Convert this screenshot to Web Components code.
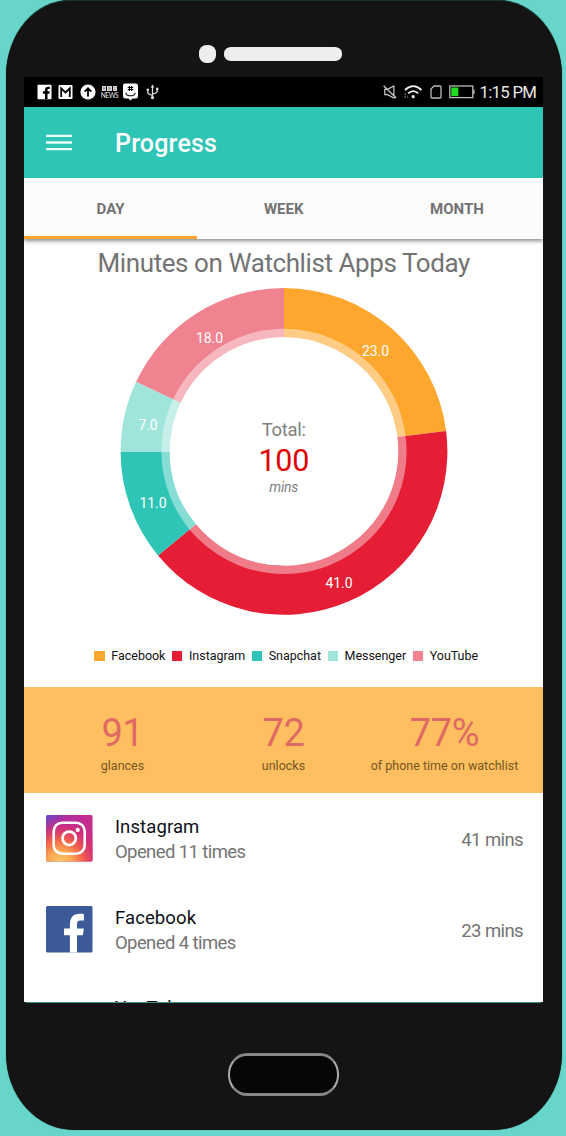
<!DOCTYPE html>
<html lang="en">
<head>
<meta charset="utf-8">
<title>Progress</title>
<style>
  html, body { margin: 0; padding: 0; }
  body { width: 566px; height: 1136px; overflow: hidden; background: #67d5c9; font-family: Roboto, "Liberation Sans", sans-serif; }
</style>
</head>
<body>
<phone-frame>
  <status-bar></status-bar>
  <app-bar>Progress</app-bar>
  <tab-strip>
    <tab-item active>DAY</tab-item>
    <tab-item>WEEK</tab-item>
    <tab-item>MONTH</tab-item>
  </tab-strip>
  <usage-chart heading="Minutes on Watchlist Apps Today"></usage-chart>
  <stat-band>
    <stat-item value="91" style="--w:197px">glances</stat-item>
    <stat-item value="72" style="--w:125px">unlocks</stat-item>
    <stat-item value="77%" style="--w:197px">of phone time on watchlist</stat-item>
  </stat-band>
  <app-row name="Instagram" opened="Opened 11 times" time="41 mins">
    <svg slot="icon" width="47" height="47" viewBox="0 0 47 47">
      <defs>
        <linearGradient id="ga" x1="0" y1="0" x2="1" y2="0"><stop offset="0" stop-color="#6a46c8"/><stop offset=".45" stop-color="#b02ea0"/><stop offset="1" stop-color="#c92d8c"/></linearGradient>
        <radialGradient id="gb" cx=".3" cy="1.02" r="1"><stop offset="0" stop-color="#fdc864"/><stop offset=".25" stop-color="#fba950"/><stop offset=".5" stop-color="#f2604c"/><stop offset=".75" stop-color="#da3070" stop-opacity=".8"/><stop offset="1" stop-color="#c92d8c" stop-opacity="0"/></radialGradient>
      </defs>
      <rect width="46.5" height="46.5" rx="1.5" fill="url(#ga)"/>
      <rect width="46.5" height="46.5" rx="1.5" fill="url(#gb)"/>
      <rect x="7.7" y="7.7" width="31" height="31" rx="8.5" fill="none" stroke="#fff" stroke-width="2.6"/>
      <circle cx="23.2" cy="23.3" r="6.7" fill="none" stroke="#fff" stroke-width="2.7"/>
      <circle cx="31.7" cy="14.9" r="2.1" fill="#fff"/>
    </svg>
  </app-row>
  <app-row name="Facebook" opened="Opened 4 times" time="23 mins">
    <svg slot="icon" width="47" height="47" viewBox="0 0 47 47">
      <rect width="46.5" height="46.5" rx="1.5" fill="#3c5a98"/>
      <path fill="#fff" d="M23.9 46.5V29.2H18v-6.8h5.9v-4.2c0-6.6 3.6-10.5 9.7-10.5 1.8 0 3.4.1 4.3.3v6.4h-3.4c-2.7 0-3.5 1.4-3.5 3.6v4.4h6.8l-.9 6.8H31v17.3z"/>
    </svg>
  </app-row>
  <app-row name="YouTube" opened="" time="" style="margin-top:-1.2px"></app-row>
</phone-frame>

<script>
function define(name, render) {
  customElements.define(name, class extends HTMLElement {
    constructor() { super(); this.attachShadow({ mode: 'open' }); }
    connectedCallback() { this.shadowRoot.innerHTML = render(this); }
  });
}

define('phone-frame', () => `
<style>
  :host { display: block; box-sizing: border-box; width: 556.5px; height: 1130px; margin-left: 5.8px; background: #141414;
    border-radius: 64px 64px 68px 68px / 76px; overflow: hidden; box-shadow: 0 0 1px #1d4b47; border-top: 1px solid #14302e; }
  .top { height: 76px; box-sizing: border-box; display: flex; align-items: center; gap: 7.5px; padding: 30px 0 0 193.6px; }
  .cam { width: 17px; height: 18.5px; border-radius: 7.5px; background: #eee; }
  .ear { width: 118.5px; height: 14.5px; border-radius: 7px / 6px; background: #eee; }
  .screen { width: 519.5px; height: 925px; margin-left: 18.2px; background: #fff; overflow: hidden; display: flex; flex-direction: column; }
  .edge { height: 1px; width: 515px; margin-left: 20px; background: #3f8f86; }
  .bottom { display: flex; justify-content: center; padding: 49.5px 2px 0 0; }
  .home { box-sizing: border-box; width: 111px; height: 43px; border: solid #aaa; border-width: 3.5px 2px; border-color: #868686 #aaa; border-radius: 19px / 21px; background: #040608; }
</style>
<div class="top"><div class="cam"></div><div class="ear"></div></div>
<div class="screen"><slot></slot></div>
<div class="edge"></div>
<div class="bottom"><div class="home"></div></div>`);

define('status-bar', () => `
<style>
  :host { display: flex; flex: none; height: 30px; background: #000; align-items: center; justify-content: space-between; box-sizing: border-box; padding: 0 7.5px 0 13px; }
  .g { display: flex; align-items: center; }
  svg { display: block; }
  .bbc { width: 17px; margin: 0 4.5px 0 5px; color: #ddd; }
  .b { display: flex; gap: 1px; justify-content: center; }
  .b span { background: #ddd; color: #888; width: 4.4px; height: 5px; font: 700 4px/5px Roboto, sans-serif; text-align: center; overflow: hidden; }
  .n { display: flex; justify-content: center; font: 500 6.6px/8px Lato, sans-serif; letter-spacing: -.4px; white-space: nowrap; }
  .t { font-size: 16.8px; letter-spacing: -.7px; word-spacing: 0; line-height: 30px; color: #e8e8e8; white-space: nowrap; margin: 0 -.3px 0 4px; }
</style>
<div class="g">
  <svg width="15" height="16" viewBox="0 0 15 16"><rect x=".5" y=".8" width="14" height="14.4" rx=".8" fill="#fff"/><path d="M8 15.2V9.7H6V7.3h2V6c0-2 1.2-3.2 3-3.2h1.8v2.3h-1.2c-.8 0-1.1.4-1.1 1.1v1.1h2.2l-.3 2.4h-1.9v5.5z" fill="#000"/></svg>
  <svg width="15" height="16" viewBox="0 0 15 16" style="margin-left:6.5px"><rect x=".5" y="1" width="14" height="14" rx="1" fill="#fff"/><path d="M3.2 13V4.4L7.5 8.4l4.3-4V13" fill="none" stroke="#000" stroke-width="1.8"/></svg>
  <svg width="16" height="16" viewBox="0 0 16 16" style="margin-left:6.5px"><circle cx="8" cy="8" r="7.6" fill="#fff"/><path d="M8 12.5V5M4.7 7.6L8 4.3l3.3 3.3" fill="none" stroke="#000" stroke-width="1.8"/></svg>
  <div class="bbc"><div class="b"><span>B</span><span>B</span><span>C</span></div><div class="n">NEWS</div></div>
  <svg width="17" height="18" viewBox="0 0 17 18"><path d="M3.3.5h10.4Q16 .5 16 2.8v10.4q0 2.3-2.3 2.3h-3.2L8.5 17.6 6.5 15.5H3.3Q1 15.5 1 13.2V2.8Q1 .5 3.3.5z" fill="#fff"/><path d="M7.4 3v5M9.6 3v5M5.7 4.5h5.6M5.7 6.5h5.6M3.7 9.8c1.2 4 8.4 4 9.6 0" fill="none" stroke="#000" stroke-width="1.1"/></svg>
  <svg width="13" height="16" viewBox="0 0 13 16" style="margin-left:7px"><path d="M6.5 2.5v10.5M1.8 6.2v2.3q0 1.5 4.7 3M11.2 5v2.2q0 1.6-4.7 3" fill="none" stroke="#ddd" stroke-width="1.3"/><path d="M6.5 .6l1.9 2.9H4.6z" fill="#ddd"/><circle cx="6.5" cy="13.6" r="1.7" fill="#ddd"/><circle cx="1.8" cy="5.8" r="1.3" fill="#ddd"/><rect x="10" y="3.7" width="2.4" height="2.4" fill="#ddd"/></svg>
</div>
<div class="g">
  <svg width="14" height="16" viewBox="0 0 14 16"><path d="M1.8 5.3h2.8L10.9 2v12L4.6 10.7H1.8zM.6 1.8l12.6 12.2" fill="none" stroke="#ccc" stroke-width="1.2"/></svg>
  <svg width="18" height="16" viewBox="0 0 18 16" style="margin-left:7.5px"><path d="M.9 6Q9.5-1.8 17.4 6M4.2 9.4q5-4.5 10 0" fill="none" stroke="#eee" stroke-width="1.8"/><circle cx="9.2" cy="12.7" r="1.6" fill="#eee"/><path d="M1.2 9.2v2M1.2 12v2M3 13.2h1" stroke="#777" stroke-width="1.2"/></svg>
  <svg width="12" height="14" viewBox="0 0 12 14" style="margin-left:8px"><path d="M4 1h6q1 0 1 1v10q0 1-1 1H2q-1 0-1-1V4z" fill="none" stroke="#bbb" stroke-width="1.3"/></svg>
  <svg width="26" height="14" viewBox="0 0 26 14" style="margin-left:7px"><rect x=".8" y="1" width="23" height="11.6" fill="none" stroke="#bbb" stroke-width="1.3"/><rect x="2.3" y="2.5" width="7" height="8.6" fill="#1fdd1f"/><rect x="24.2" y="4.6" width="1.4" height="4.4" fill="#bbb"/></svg>
  <span class="t">1:15 PM</span>
</div>`);

define('app-bar', () => `
<style>
  :host { display: flex; flex: none; height: 71px; background: #2ec4b6; align-items: center; padding-left: 22px; color: #fff; }
  .title { font-size: 25px; letter-spacing: .2px; font-weight: 500; line-height: 30px; margin: 2px 0 0 43px; }
  svg { margin-bottom: 2px; }
</style>
<svg width="26" height="18" viewBox="0 0 26 18"><path d="M0 2.8h26M0 9.5h26M0 16.2h26" stroke="#e8fffc" stroke-width="2.3"/></svg>
<div class="title"><slot></slot></div>`);

define('tab-strip', () => `
<style>
  :host { display: flex; flex: none; height: 60.5px; background: #fcfcfc; box-shadow: 0 2px 4px rgba(0,0,0,.45); clip-path: inset(0 0 -8px 0); }
</style><slot></slot>`);

define('tab-item', el => `
<style>
  :host { flex: 1; display: flex; box-sizing: border-box; align-items: center; justify-content: center; padding-top: 4px; border-bottom: 3.5px solid ${el.hasAttribute('active') ? '#f9a62f' : 'transparent'}; color: #737373; font-size: 15px; font-weight: 700; line-height: 20px; }
</style><slot></slot>`);

const SLICES = [
  { name: 'Facebook', value: 23, color: '#fda72e', x: 375.5, y: 351 },
  { name: 'Instagram', value: 41, color: '#e51e35', x: 339, y: 583 },
  { name: 'Snapchat', value: 11, color: '#2ec4b6', x: 153, y: 502.5 },
  { name: 'Messenger', value: 7, color: '#a0e5dc', x: 148, y: 425 },
  { name: 'YouTube', value: 18, color: '#ef8390', x: 209.5, y: 338 }
];

define('usage-chart', el => {
  const cx = 284, cy = 451.4, R = 163.4, H = 114.4, T = 122.6;
  const pt = (a, r) => `${(cx + r * Math.sin(a)).toFixed(2)} ${(cy - r * Math.cos(a)).toFixed(2)}`;
  let a = 0, arcs = '', labels = '';
  for (const s of SLICES) {
    const b = a + s.value / 100 * 2 * Math.PI;
    arcs += `<path fill="${s.color}" d="M${pt(a, R)}A${R} ${R} 0 0 1 ${pt(b, R)}L${pt(b, H)}A${H} ${H} 0 0 0 ${pt(a, H)}z"/>`;
    labels += `<text x="${s.x}" y="${s.y + 5}">${s.value.toFixed(1)}</text>`;
    a = b;
  }
  return `
<style>
  :host { display: block; flex: none; height: 448px; text-align: center; }
  h1 { margin: 0; padding-top: 8px; font-size: 26px; letter-spacing: -.42px; line-height: 32px; font-weight: 400; color: #737373; white-space: nowrap; }
  .pie { display: grid; place-items: center; margin-top: 7.5px; height: 332px; }
  .pie > * { grid-area: 1 / 1; }
  svg { display: block; }
  text { font: 14px Roboto, sans-serif; fill: #fff; text-anchor: middle; letter-spacing: -.1px; }
  .c { color: #808080; padding-top: 7px; }
  .a { font-size: 18.5px; letter-spacing: -.3px; line-height: 24px; }
  .b { font-size: 30.5px; letter-spacing: -.3px; line-height: 38px; color: #e00000; }
  .d { font-size: 14px; letter-spacing: -.2px; line-height: 14px; font-style: italic; }
  .legend { display: flex; margin: 30px 0 0 70.4px; font-size: 12.5px; letter-spacing: -.03px; line-height: 16px; color: #111; }
  .legend div { display: flex; align-items: center; margin-right: 6.6px; white-space: nowrap; }
  i { width: 10.3px; height: 10.3px; margin-right: 6.7px; }
</style>
<h1>${el.getAttribute('heading')}</h1>
<div class="pie">
  <svg width="332" height="332" viewBox="118 286 332 332">${arcs}<circle cx="${cx}" cy="${cy}" r="${(T + H) / 2}" fill="none" stroke="#fff" stroke-opacity=".42" stroke-width="${T - H}"/>${labels}</svg>
  <div class="c"><div class="a">Total:</div><div class="b">100</div><div class="d">mins</div></div>
</div>
<div class="legend">${SLICES.map(s => `<div><i style="background:${s.color}"></i>${s.name}</div>`).join('')}</div>`;
});

define('stat-band', () => `
<style>
  :host { display: flex; flex: none; height: 106.5px; background: #ffbf60; }
</style><slot></slot>`);

define('stat-item', el => `
<style>
  :host { display: block; width: var(--w); text-align: center; white-space: nowrap; }
  .v { font-size: 38px; letter-spacing: -.3px; line-height: 44px; padding-top: 24px; color: #de6a63; }
  .l { font-size: 12.5px; line-height: 16px; margin-top: 3.5px; color: #75561f; }
</style>
<div class="v">${el.getAttribute('value')}</div><div class="l"><slot></slot></div>`);

define('app-row', el => `
<style>
  :host { display: flex; flex: none; height: 91.2px; box-sizing: border-box; padding: 22px 20.5px 0 22px; color: #747474; font-size: 18.5px; letter-spacing: -.6px; }
  .icon { width: 69px; flex: none; }
  .text { flex: 1; line-height: 24.6px; }
  .name { color: #0d0f18; letter-spacing: .1px; }
  .time { line-height: 50px; }
</style>
<div class="icon"><slot name="icon"></slot></div>
<div class="text"><div class="name">${el.getAttribute('name')}</div><div>${el.getAttribute('opened')}</div></div>
<div class="time">${el.getAttribute('time')}</div>`);
</script>
</body>
</html>
